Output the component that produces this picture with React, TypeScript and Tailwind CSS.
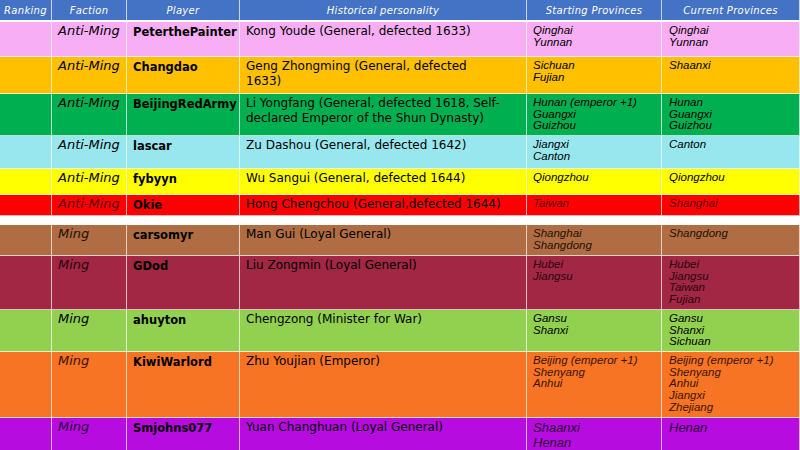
import React from "react";

type Row = {
  bg: string;
  h: string;
  tone: string;
  faction: string;
  player: string;
  person: string[];
  start: string[];
  current: string[];
  big?: boolean;
};

const cols = "grid grid-cols-[52px_75px_113px_287px_135px_138px]";

const rows: Row[] = [
  {
    bg: "bg-[#f8aef5]",
    h: "h-[35px]",
    tone: "text-black",
    faction: "Anti-Ming",
    player: "PeterthePainter",
    person: ["Kong Youde (General, defected 1633)"],
    start: ["Qinghai", "Yunnan"],
    current: ["Qinghai", "Yunnan"],
  },
  {
    bg: "bg-[#ffc000]",
    h: "h-[37px]",
    tone: "text-black",
    faction: "Anti-Ming",
    player: "Changdao",
    person: ["Geng Zhongming (General, defected", "1633)"],
    start: ["Sichuan", "Fujian"],
    current: ["Shaanxi"],
  },
  {
    bg: "bg-[#00b050]",
    h: "h-[42px]",
    tone: "text-black",
    faction: "Anti-Ming",
    player: "BeijingRedArmy",
    person: ["Li Yongfang (General, defected 1618, Self-", "declared Emperor of the Shun Dynasty)"],
    start: ["Hunan (emperor +1)", "Guangxi", "Guizhou"],
    current: ["Hunan", "Guangxi", "Guizhou"],
  },
  {
    bg: "bg-[#98e6ee]",
    h: "h-[33px]",
    tone: "text-black",
    faction: "Anti-Ming",
    player: "lascar",
    person: ["Zu Dashou (General, defected 1642)"],
    start: ["Jiangxi", "Canton"],
    current: ["Canton"],
  },
  {
    bg: "bg-[#ffff00]",
    h: "h-[26px]",
    tone: "text-black",
    faction: "Anti-Ming",
    player: "fybyyn",
    person: ["Wu Sangui (General, defected 1644)"],
    start: ["Qiongzhou"],
    current: ["Qiongzhou"],
  },
  {
    bg: "bg-[#ff0000]",
    h: "h-[21px]",
    tone: "text-[#5a0000]",
    faction: "Anti-Ming",
    player: "Okie",
    person: ["Hong Chengchou (General,defected 1644)"],
    start: ["Taiwan"],
    current: ["Shanghai"],
  },
];

const rows2: Row[] = [
  {
    bg: "bg-[#b06c42]",
    h: "h-[31px]",
    tone: "text-[#1e120a]",
    faction: "Ming",
    player: "carsomyr",
    person: ["Man Gui (Loyal General)"],
    start: ["Shanghai", "Shangdong"],
    current: ["Shangdong"],
  },
  {
    bg: "bg-[#a12744]",
    h: "h-[54px]",
    tone: "text-[#2a0510]",
    faction: "Ming",
    player: "GDod",
    person: ["Liu Zongmin (Loyal General)"],
    start: ["Hubei", "Jiangsu"],
    current: ["Hubei", "Jiangsu", "Taiwan", "Fujian"],
  },
  {
    bg: "bg-[#92d050]",
    h: "h-[42px]",
    tone: "text-black",
    faction: "Ming",
    player: "ahuyton",
    person: ["Chengzong (Minister for War)"],
    start: ["Gansu", "Shanxi"],
    current: ["Gansu", "Shanxi", "Sichuan"],
  },
  {
    bg: "bg-[#f77424]",
    h: "h-[66px]",
    tone: "text-[#3a1300]",
    faction: "Ming",
    player: "KiwiWarlord",
    person: ["Zhu Youjian (Emperor)"],
    start: ["Beijing (emperor +1)", "Shenyang", "Anhui"],
    current: ["Beijing (emperor +1)", "Shenyang", "Anhui", "Jiangxi", "Zhejiang"],
  },
  {
    bg: "bg-[#b70ce0]",
    h: "h-[40px]",
    tone: "text-[#2e0038]",
    faction: "Ming",
    player: "Smjohns077",
    person: ["Yuan Changhuan (Loyal General)"],
    start: ["Shaanxi", "Henan"],
    current: ["Henan"],
    big: true,
  },
];

const cell = "border-r border-white/70 px-[6px]";

function TableRow({ r }: { r: Row }) {
  const prov = r.big
    ? "text-[13px] leading-[15px] pt-[2px]"
    : "text-[11.5px] leading-[11.7px] pt-[3px]";
  return (
    <div className={`${cols} ${r.bg} ${r.h} border-b border-white/70`}>
      <div className={cell} />
      <div className={`${cell} ${r.tone} italic text-[13px] leading-[16px] pt-[1px]`}>{r.faction}</div>
      <div className={`${cell} text-black font-bold text-[11.5px] leading-[16px] pt-[2px] whitespace-nowrap`}>{r.player}</div>
      <div className={`${cell} text-black text-[12px] leading-[15px] pt-[2px] whitespace-nowrap`}>
        {r.person.map((l) => (
          <div key={l}>{l}</div>
        ))}
      </div>
      <div className={`${cell} ${r.tone} italic font-['Liberation_Sans',sans-serif] whitespace-nowrap ${prov}`}>
        {r.start.map((l) => (
          <div key={l}>{l}</div>
        ))}
      </div>
      <div className={`${cell} ${r.tone} italic font-['Liberation_Sans',sans-serif] whitespace-nowrap pl-[7px] ${prov}`}>
        {r.current.map((l) => (
          <div key={l}>{l}</div>
        ))}
      </div>
    </div>
  );
}

export default function App() {
  const heads = ["Ranking", "Faction", "Player", "Historical personality", "Starting Provinces", "Current Provinces"];
  return (
    <div className="w-[800px] h-[450px] overflow-hidden bg-white font-['DejaVu_Sans',sans-serif]">
      <div className={`${cols} h-[22px] bg-[#4472c4] border-b-2 border-white`}>
        {heads.map((t) => (
          <div key={t} className="border-r border-white/70 flex items-center justify-center text-white italic text-[10px] tracking-[0.3px]">
            {t}
          </div>
        ))}
      </div>
      {rows.map((r) => (
        <TableRow key={r.player} r={r} />
      ))}
      <div className="h-[9px] bg-white" />
      {rows2.map((r) => (
        <TableRow key={r.player} r={r} />
      ))}
    </div>
  );
}
